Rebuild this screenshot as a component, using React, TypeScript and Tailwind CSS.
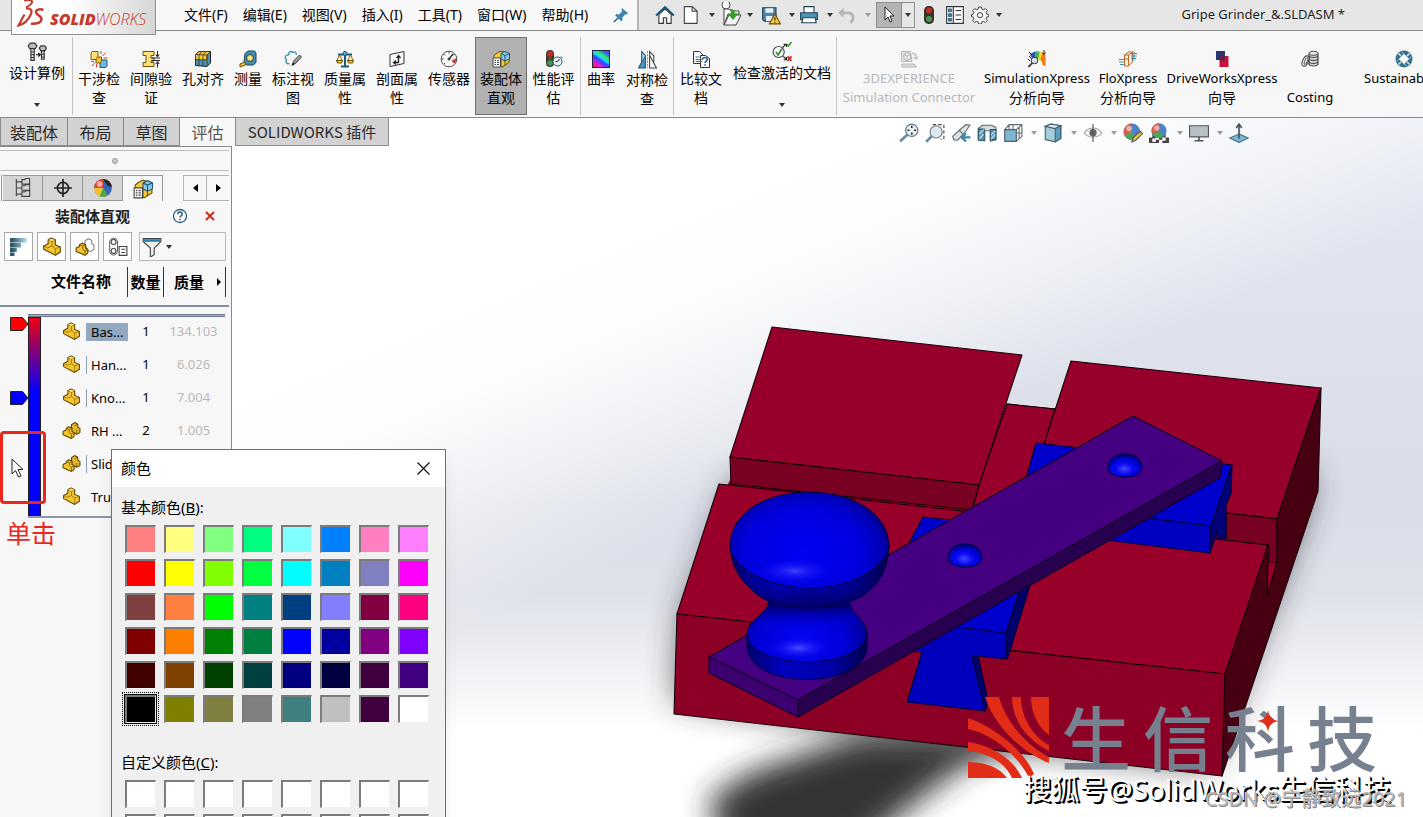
import type { ReactNode } from 'react'

const uiFont = "font-['Noto_Sans','Noto_Sans_CJK_SC',sans-serif]"
const cjkFont = "font-['Noto_Sans_CJK_SC','Noto_Sans',sans-serif]"

function Icon({ children, size = 18 }: { children: ReactNode; size?: number }) {
  return (
    <svg width={size} height={size} viewBox="0 0 18 18" fill="none" strokeWidth="1" className="shrink-0" aria-hidden="true">
      {children}
    </svg>
  )
}

function Caret({ faded = false }: { faded?: boolean }) {
  return (
    <svg width="6" height="4" viewBox="0 0 6 4" className="shrink-0" aria-hidden="true">
      <path d="M0 0h6L3 4z" fill={faded ? '#9a9a9a' : '#333'} />
    </svg>
  )
}

const PartShape = () => (
  <>
    <path d="M1.500 8 5.500 6V2.500L8.500 1l3.500 1.500V7l4.500 2v4.500L12 16.500 1.500 11z" fill="#f4c430" stroke="#5a4300" strokeLinejoin="round" />
    <path d="M5.500 2.500 9 4.200l3-1.700M9 4.200V8l3 2.500 4.500-1.500M12 10.500v5.500M1.500 8 5 9.800 9 8" stroke="#8a6800" strokeWidth=".7" />
    <path d="M6 2.700 8.500 1.500l3 1.200L9 3.900z" fill="#ffe27a" />
  </>
)

const icons = {
  bolts: (
    <>
      <path d="M1 3.500 3 1h4l2 2.500L7.500 6h-5z" fill="#bbb" stroke="#333" />
      <path d="M3.500 6v10.500h3V6z" fill="#ddd" stroke="#333" />
      <path d="M3.500 9h3M3.500 11.500h3M3.500 14h3" stroke="#333" />
      <path d="m11 5.500 1.500-2h3.500l1.500 2L16 8h-3.500z" fill="#bbb" stroke="#333" />
      <path d="M13 8v7.500h2.500V8zM13 11h2.500M13 13.500h2.500" fill="#ddd" stroke="#333" />
      <path d="M8 11.500h3.500M10 9.800l2 1.700-2 1.700" stroke="#111" />
    </>
  ),
  interference: (
    <>
      <path d="M1 3 2.500 1.500H8V8L6.500 9.500H1z" fill="#ffe07a" stroke="#7a5c00" />
      <path d="M10 11.500 11.500 10H17v6l-1.500 1.500H10z" fill="#6db7dd" stroke="#1d5876" />
      <path d="M6 8.500 8 7h3.500v4.500L10 13H6z" fill="#f2c12e" stroke="#7a5c00" />
      <path d="M11 4V1M12.500 6 16 2.500M13.500 8h4M5 12.500 2 16M6.500 14v3.500M4 11.500H1" stroke="#d8392b" />
    </>
  ),
  clearance: (
    <>
      <path d="M1 1.500h11v4H9v2.500h3v3H9v1.500h3v4H1v-4h3v-7H1z" fill="#ffe07a" stroke="#6b5200" />
      <path d="M9.500 8H18M9.500 10.500H18" stroke="#222" />
      <path d="M15.500 1v5M15.500 17.500v-5M13.800 4.500l1.700 2.500 1.700-2.500M13.800 14l1.700-2.500 1.700 2.500" stroke="#222" />
    </>
  ),
  holes: (
    <>
      <path d="M1.500 4.500 5 1.500h11.500V13L13 16.500l-11.500-1z" fill="#4f93b5" stroke="#222" />
      <path d="M1.500 4.500 5 1.500h11.500L13 5v5l-11.500-.500z" fill="#f6c83a" stroke="#5a4300" />
      <path d="M1.500 4.500 13 5M5 5v11M9 5v11M13 5v11.500M5 5l3-3.500M9 5l3-3.500" stroke="#333" strokeWidth=".8" />
    </>
  ),
  measure: (
    <>
      <path d="M6 3.500 9 1h6.500L17 3v9.500L14 15H7.500L5 12z" fill="#3f8fb8" stroke="#1b465c" />
      <circle cx="11" cy="8" r="3.500" fill="#f6d24c" stroke="#1b465c" />
      <circle cx="11" cy="8" r="1.200" fill="#fff" />
      <path d="M7 14.500 1 17v-3l5-2z" fill="#f2c12e" stroke="#6b5200" />
    </>
  ),
  markup: (
    <>
      <path d="M5 5c-1-3 2-4.500 3.500-2.500C10.500 1 13 2.500 12 5M5 5C1.500 4.500 0 7.500 2.500 9.500 1 12 3 14.500 5.500 13.500" stroke="#3a8ba5" strokeWidth="1.300" />
      <path d="m8 15.500 2-5L15.500 5l2 2-5.500 6z" fill="#999" stroke="#444" />
      <path d="m8 15.500 1-3 2 1.500z" fill="#222" />
    </>
  ),
  mass: (
    <>
      <path d="M9 1v15M2 4.500h14" stroke="#1d5876" strokeWidth="2" />
      <path d="M5 16.500h8" stroke="#1d5876" strokeWidth="2" />
      <path d="m3.500 5-3 6h6zM14.500 5l-3 6h6z" stroke="#8a6800" />
      <path d="M.500 10.500h6L5.500 13h-4zM11.500 10.500h6l-1 2.500h-4z" fill="#f6c83a" stroke="#6b5200" />
      <circle cx="9" cy="3.500" r="2" fill="#5fb0d8" stroke="#1d5876" />
    </>
  ),
  section: (
    <>
      <path d="M2 4.500 16 1.500v12L2 16.500z" fill="#fafafa" stroke="#333" />
      <path d="M6 12.500h4.500V6.500M8.500 8l2-2.500 2 2.500M8 10.500l-2.500 2 2.500 2" stroke="#222" strokeWidth="1.300" />
    </>
  ),
  sensor: (
    <>
      <circle cx="9" cy="9" r="7.800" fill="#fafafa" stroke="#555" />
      <path d="M9 1.500v2M3.500 4l1.500 1.500M14.500 4 13 5.500M1.500 9h2M14.500 9h2M4 14l1-1" stroke="#444" />
      <path d="m9 9 4-5" stroke="#222" strokeWidth="1.300" />
      <path d="M12.500 9.500h4l-1.500 4-3-1.500z" fill="#d8392b" />
      <circle cx="9" cy="9" r="1.500" fill="#444" />
    </>
  ),
  visualize: (
    <>
      <path d="M2 8V5.500L5 3l4-2 8 3v8.500L10 17l-6-2z" fill="#f6c83a" stroke="#6b5200" />
      <path d="m9 3.500 4-2 4.500 2V9L13 11 9 9z" fill="#8ccbe8" stroke="#1d5876" />
      <path d="M9 3.500 13 5.500l4.500-2M13 5.500V11" stroke="#1d5876" />
      <path d="M9 9v7.500M13 11v4.500" stroke="#6b5200" />
      <path d="M1 8h7.500v9H1z" fill="#fff" stroke="#444" />
      <path d="M2.500 10.500H4M5 10.500h2M2.500 12.500H4M5 12.500h2M2.500 14.500H4M5 14.500h2" stroke="#444" />
    </>
  ),
  performance: (
    <>
      <rect x="1" y="0" width="8" height="17" rx="4" fill="#3a3a3a" />
      <circle cx="5" cy="4" r="3" fill="#c03028" />
      <circle cx="5" cy="8.500" r="1.500" fill="#6b5428" />
      <circle cx="5" cy="13" r="2.800" fill="#3f9b4b" />
      <circle cx="12.500" cy="11.500" r="4.500" fill="#eaf4f8" stroke="#25566e" />
      <path d="M12.500 11.500 14.500 9M12.500 11.500h-2M9 6.500l-1 1M16 6.500l1.500 1.500" stroke="#222" />
    </>
  ),
  symmetry: (
    <>
      <path d="M7 5v12H.500z" fill="#4f93b5" stroke="#1d5876" />
      <path d="M3.500 11V1.500L7 5" fill="#a5d2e6" stroke="#1d5876" />
      <path d="M11 5v12h6.500z" fill="#fafafa" stroke="#444" />
      <path d="M11 5V1.500l4 4V12" stroke="#444" />
      <path d="M9 1v16" stroke="#888" strokeDasharray="2 1" />
    </>
  ),
  compare: (
    <>
      <path d="M1.500 1.500h6L11 5v8.500H1.500z" fill="#fff" stroke="#333" />
      <path d="M8.500 5.500h5l4 3v9h-9z" fill="#fff" stroke="#333" />
      <path d="M3.500 7h4M3.500 9.500h7M3.500 11.500h7" stroke="#3a7d9c" />
      <path d="M10.700 9.500c0-2.600 4.600-2.600 4.600 0 0 1.800-2.300 1.700-2.300 3.500M13 14.200v1.600" stroke="#1d6d94" strokeWidth="1.600" />
    </>
  ),
  checkDoc: (
    <>
      <circle cx="6" cy="9" r="5" fill="#fff" stroke="#444" />
      <path d="m3.500 9 2 2.500L9 6" stroke="#3c9a3c" strokeWidth="1.800" />
      <path d="m9.500 5 3-3M10.500 2h2.500v2.500M10 13l3 2.500M10.500 16H13v-2.500" stroke="#222" />
      <path d="m13.500 2 1.200 1.500L17.500 0" stroke="#3c9a3c" strokeWidth="1.500" />
      <path d="m14 13 3.500 4M17.500 13 14 17" stroke="#c0302a" strokeWidth="1.600" />
    </>
  ),
  connector: (
    <>
      <path d="M1.500 1.500h9l1.500 10H1.500z" fill="#e0e0e0" stroke="#bbb" />
      <path d="m4 4.500 3-2 3.500 2v4L7 11 4 9z" fill="#f2f2f2" stroke="#b0b0b0" />
      <path d="M4 4.500 7.200 6l3.300-1.500M7 6v5" stroke="#b0b0b0" />
      <path d="M12 3c4 0 5 2 4 6M13.500 7l2.500 2.500L18 7M2 14h12l2.500 3H2z" fill="#ddd" stroke="#b5b5b5" />
    </>
  ),
  simulation: (
    <>
      <path d="M2 5C7 0 13 1 17.500 5v11l-3-1C14 10 11 8.500 6 10z" fill="#f6d21e" />
      <path d="M2 5c2-2.300 4-3.200 6-3.500L6.500 9.500H5z" fill="#2e4fc4" />
      <path d="M8 1.500c1.500-.2 2.500 0 3.500.3L10 9.200l-3.500.3z" fill="#3cb45a" />
      <path d="M14.500 3 17.500 5v11l-3-1c0-3-1-4.500-2-5.500z" fill="#ee7b22" />
      <path d="M16 0v4M14.500 2.500 16 4.500l1.500-2M1 2l3 3M1 6l3 3M0 9l2 2" stroke="#222" />
      <circle cx="6.500" cy="10.500" r="3.300" fill="#cfe3ee" stroke="#333" />
      <path d="m4.300 13-4 4" stroke="#444" strokeWidth="1.800" />
    </>
  ),
  flow: (
    <>
      <path d="m5.500 5 4-3h4v10l-4 4h-4z" fill="#f5e9da" stroke="#b56a2c" />
      <path d="M9.500 5v11M5.500 5h4l4-3M5.500 9h4" stroke="#b56a2c" />
      <path d="M0 9.500h5M0 12h5M1 14.500h4M12 3.500h6M12 6h6M12 8.500h5M15 1.500v9" stroke="#3a95ab" />
    </>
  ),
  driveworks: (
    <>
      <path d="M3 1h9v9H3z" fill="#26386c" />
      <path d="M6.500 6h9v11h-9z" fill="#c8143a" />
      <path d="M6.500 6H12v4.500H6.500z" fill="#6b1c44" />
    </>
  ),
  costing: (
    <>
      <path d="M7.500 3.500v12h9.500v-12z" fill="#d2d2d2" />
      <ellipse cx="12.500" cy="3.300" rx="4.500" ry="2" fill="#eee" stroke="#444" />
      <path d="M8 6c1.500 2 7.500 2 9 0M8 9c1.500 2 7.500 2 9 0M8 12c1.500 2 7.500 2 9 0M8 14.500c1.500 2 7.500 2 9 0M8 3.500v11.500M17 3.500v11.500" stroke="#444" strokeWidth="1.200" />
      <ellipse cx="4.500" cy="11" rx="2.800" ry="5.500" transform="rotate(25 4.500 11)" fill="#f0f0f0" stroke="#444" />
      <ellipse cx="5" cy="11" rx="1.200" ry="3.500" transform="rotate(25 5 11)" stroke="#666" />
    </>
  ),
  sustain: (
    <>
      <circle cx="9" cy="9" r="8.500" fill="#35708c" />
      <path d="m9 3.800 5.200 5.200L9 14.200 3.800 9z" fill="#f7f7f7" />
      <path d="M3.500 3.500 6 6M14.500 3.500 12 6M3.500 14.500 6 12M14.500 14.500 12 12" stroke="#f7f7f7" strokeWidth="1.300" />
      <path d="M6.500 2 9 4M16 6.500 14 9M11.500 16 9 14M2 11.500 4 9" stroke="#8ec1d6" />
    </>
  ),
}

function Curvature() {
  return (
    <span className="block size-[18px] border border-gray-800 bg-[linear-gradient(35deg,#ff2020_0%,#e020e0_22%,#3040ff_42%,#20d8ff_55%,#28f060_68%,#3060ff_84%,#b01ff0_100%)]" />
  )
}

type Tool = {
  lines: string[]
  icon: ReactNode
  width: string
  active?: boolean
  muted?: boolean
  menu?: boolean
  sep?: boolean
}

const tools: Tool[] = [
  { lines: ['设计算例'], icon: <Icon size={20}>{icons.bolts}</Icon>, width: 'w-[71px]', menu: true, sep: true },
  { lines: ['干涉检', '查'], icon: <Icon>{icons.interference}</Icon>, width: 'w-[52px]' },
  { lines: ['间隙验', '证'], icon: <Icon>{icons.clearance}</Icon>, width: 'w-[52px]' },
  { lines: ['孔对齐'], icon: <Icon>{icons.holes}</Icon>, width: 'w-[52px]' },
  { lines: ['测量'], icon: <Icon>{icons.measure}</Icon>, width: 'w-[38px]' },
  { lines: ['标注视', '图'], icon: <Icon>{icons.markup}</Icon>, width: 'w-[52px]' },
  { lines: ['质量属', '性'], icon: <Icon>{icons.mass}</Icon>, width: 'w-[52px]' },
  { lines: ['剖面属', '性'], icon: <Icon>{icons.section}</Icon>, width: 'w-[52px]' },
  { lines: ['传感器'], icon: <Icon>{icons.sensor}</Icon>, width: 'w-[52px]' },
  { lines: ['装配体', '直观'], icon: <Icon>{icons.visualize}</Icon>, width: 'w-[52px]', active: true },
  { lines: ['性能评', '估'], icon: <Icon>{icons.performance}</Icon>, width: 'w-[54px]', sep: true },
  { lines: ['曲率'], icon: <Curvature />, width: 'w-[40px]' },
  { lines: ['对称检', '查'], icon: <Icon size={19}>{icons.symmetry}</Icon>, width: 'w-[53px]', sep: true },
  { lines: ['比较文', '档'], icon: <Icon>{icons.compare}</Icon>, width: 'w-[54px]' },
  { lines: ['检查激活的文档'], icon: <Icon size={20}>{icons.checkDoc}</Icon>, width: 'w-[109px]', menu: true, sep: true },
  { lines: ['3DEXPERIENCE', 'Simulation Connector'], icon: <Icon>{icons.connector}</Icon>, width: 'w-[144px]', muted: true },
  { lines: ['SimulationXpress', '分析向导'], icon: <Icon>{icons.simulation}</Icon>, width: 'w-[112px]' },
  { lines: ['FloXpress', '分析向导'], icon: <Icon>{icons.flow}</Icon>, width: 'w-[70px]' },
  { lines: ['DriveWorksXpress', '向导'], icon: <Icon>{icons.driveworks}</Icon>, width: 'w-[118px]' },
  { lines: ['', 'Costing'], icon: <Icon>{icons.costing}</Icon>, width: 'w-[58px]' },
  { lines: ['Sustainab'], icon: <Icon>{icons.sustain}</Icon>, width: 'w-[130px]' },
]

const isLatin = (text: string) => /^[\x20-\x7e]+$/.test(text)

function RibbonButton({ tool }: { tool: Tool }) {
  const clipped = tool.lines[0] === 'Sustainab'
  return (
    <div className={`flex shrink-0 ${tool.width} ${tool.sep ? 'border-r border-[#c4c4c4]' : ''}`}>
      <button
        className={`flex w-full flex-col items-center border leading-[19px] whitespace-nowrap ${tool.menu ? 'pt-1' : 'pt-[12px]'} ${
          tool.active ? 'border-[#6e6e6e] bg-[#b1b1b1]' : 'border-transparent'
        } ${tool.muted ? 'text-[#b9b9b9]' : 'text-black'}`}
      >
        {tool.icon}
        <span className={`mt-px flex flex-col ${clipped ? 'w-20 items-start' : 'items-center'}`}>
          {tool.lines.map((line, i) => (
            <span key={i} className={`block min-h-[19px] ${isLatin(line) ? 'text-[13px]' : 'text-sm leading-[19px]'}`}>
              {line}
            </span>
          ))}
        </span>
        {tool.menu && <span className="mt-[21px]"><Caret /></span>}
      </button>
    </div>
  )
}

function Logo() {
  return (
    <a href="#" aria-label="SOLIDWORKS" className="relative z-10 ml-[11px] flex h-[35px] w-[145px] shrink-0 items-start self-start border border-t-0 border-[#8f8f8f] bg-linear-to-r from-white from-40% to-[#d6d6d6] pl-1 text-[#c33b2d]">
      <svg width="30" height="28" viewBox="0 0 30 28" fill="none" stroke="#c33b2d" aria-hidden="true">
        <path d="M8 .500c4-1 9-.500 8 2-.800 2-3.500 3.500-6 5" strokeWidth="2" />
        <path d="M10 8.500c5-.300 7 2 4.500 6.500-2 4.500-6.500 9-12 10.500C4 22.500 6.500 18 8.500 14.500" strokeWidth="2.200" />
        <path d="M27.500 9.800c-4-1.300-8-.300-7.500 2.700.500 2.500 6 3.500 5.500 7-.500 3.500-4.500 4.500-10.500 4.300" strokeWidth="2.400" />
      </svg>
      <span className="mt-[9px] ml-1 font-['Open_Sans','Noto_Sans',sans-serif] text-[16px] leading-5 font-extrabold italic">
        SOLID<span className="font-light">WORKS</span>
      </span>
    </a>
  )
}

const menus = ['文件(F)', '编辑(E)', '视图(V)', '插入(I)', '工具(T)', '窗口(W)', '帮助(H)']

function TitleBar() {
  return (
    <header className="flex h-[31px] shrink-0 items-stretch border-b border-[#8a8a8a] bg-[#e6e6e6]">
      <Logo />
      <nav className="flex shrink-0 items-center gap-[15px] border-r-2 border-[#b5b5b5] bg-[#f8f8f8] pr-2 pl-[28px]">
        {menus.map((menu) => (
          <button key={menu} className="text-sm whitespace-nowrap text-black">{menu}</button>
        ))}
        <button aria-label="固定" className="ml-[10px]">
          <Icon size={16}>
            <path d="m10 1 7 6-2 1.500-1-.300-3.500 3.500.300 3.300-1.500 1L2.500 9.500l1-1.500 3.500.300L10.300 4.500 9.500 3z" fill="#3f86ad" />
            <path d="m6 12-5 5" stroke="#2a5f80" strokeWidth="1.600" />
          </Icon>
        </button>
      </nav>
      <div className="flex shrink-0 items-center pl-[16px]">
        <button aria-label="主页">
          <Icon size={20}>
            <path d="M3.500 8.500V16.500h4v-5h3v5h4V8.500L9 3.500z" fill="#fff" stroke="#333" />
            <path d="M1 9.500 9 2l8 7.500" stroke="#1d5876" strokeWidth="2" />
          </Icon>
        </button>
        <button aria-label="新建" className="ml-[6px] flex items-center gap-2">
          <Icon size={20}>
            <path d="M3 1.500h7l4.500 4v11H3z" fill="#fff" stroke="#444" />
            <path d="M10 1.500v4h4.500" stroke="#444" />
          </Icon>
          <Caret />
        </button>
        <button aria-label="打开" className="ml-1 flex items-center gap-1">
          <svg width="24" height="26" viewBox="0 0 24 26" fill="none" aria-hidden="true">
            <path d="M5 7h5l2 2h8v3H9l-4 11z" fill="#fff" stroke="#444" />
            <path d="M10 13h12l-5 10H5z" fill="#f4f4f4" stroke="#444" />
            <path d="M10 7c5 0 6 2 6 5h3l-5 6-5-6h3c0-2 0-3-2-5z" fill="#3c9a2c" />
            <circle cx="7" cy="3" r="4" fill="#fff" stroke="#444" />
          </svg>
          <Caret />
        </button>
        <button aria-label="保存" className="ml-2 flex items-center gap-2">
          <Icon size={20}>
            <path d="M1.500 2.500h12v12H3l-1.500-1.500z" fill="#4b86a8" stroke="#1f4254" />
            <path d="M4 3h7v4H4zM4.500 10h6v4.500h-6z" fill="#e8eef2" />
            <path d="m12.500 8 5 9h-10z" fill="#f6c83a" stroke="#6b5200" />
            <path d="M12.500 11v3M12.500 15v1" stroke="#222" />
          </Icon>
          <Caret />
        </button>
        <button aria-label="打印" className="ml-1 flex items-center gap-2">
          <Icon size={20}>
            <path d="M4.500 7V1.500h9V7" fill="#fff" stroke="#1f4254" />
            <path d="M1.500 7h15v6h-15z" fill="#4f93b5" stroke="#1f4254" />
            <path d="M3.500 11.500h11l1 4.500h-13z" fill="#fff" stroke="#1f4254" />
          </Icon>
          <Caret />
        </button>
        <button aria-label="撤消" className="ml-1 flex items-center gap-2" disabled>
          <Icon size={20}>
            <path d="M3 7h7c5 0 6 6 2 9" stroke="#b5b5b5" strokeWidth="2.500" />
            <path d="M1 7 6 2.500v9z" fill="#b5b5b5" />
          </Icon>
          <Caret faded />
        </button>
        <button aria-label="选择" className="ml-[5px] flex h-[26px] w-[39px] items-center border border-[#8f8f8f]">
          <span className="flex h-full w-[25px] items-center justify-center border-r border-[#8f8f8f] bg-[#b4b4b4]">
            <Icon>
              <path d="M5 1v13l3-3 2 5 2-1-2-5h4z" fill="#fff" stroke="#222" />
            </Icon>
          </span>
          <span className="ml-[3px]"><Caret /></span>
        </button>
        <button aria-label="重建模型" className="ml-1">
          <Icon size={20}>
            <rect x="4.500" y="1" width="9" height="16" rx="4" fill="#3a3028" />
            <circle cx="9" cy="5" r="2.700" fill="#c03028" />
            <circle cx="9" cy="12.500" r="2.700" fill="#3f9b4b" />
          </Icon>
        </button>
        <button aria-label="文件属性" className="ml-[6px]">
          <Icon size={20}>
            <path d="M1.500 1.500h15v15h-15z" fill="#fff" stroke="#333" />
            <path d="M7.500 2v14" stroke="#333" />
            <path d="M3 3.500h3v2.500H3zM3 7.800h3v2.500H3zM3 12h3v2.500H3z" fill="#3f86ad" stroke="#1f4254" strokeWidth=".6" />
            <path d="M9.500 5h5M9.500 9h5M9.500 13h5" stroke="#333" />
          </Icon>
        </button>
        <button aria-label="选项" className="ml-[6px] flex items-center gap-[7px]">
          <Icon size={18}>
            <path d="M7.600 1h2.800l.5 2.200 1.500.6 1.900-1.200 2 2-1.200 1.900.6 1.500 2.200.5v2l-2.200.6-.6 1.500 1.200 1.900-2 2-1.900-1.200-1.500.6-.5 2.100H7.600l-.5-2.100-1.500-.6-1.900 1.200-2-2 1.200-1.900-.6-1.500L.500 10.500v-2l1.800-.5.6-1.500-1.200-1.900 2-2 1.900 1.200 1.500-.6z" fill="#f4f4f4" stroke="#444" />
            <circle cx="9" cy="9.200" r="2.600" stroke="#444" />
          </Icon>
          <Caret />
        </button>
      </div>
      <h1 className="ml-auto self-center pr-[78px] text-[13px] font-normal whitespace-nowrap text-[#1f1f1f]">Gripe Grinder_&amp;.SLDASM *</h1>
    </header>
  )
}

const tabs = [
  { label: '装配体', width: 'w-[67px]' },
  { label: '布局', width: 'w-[56px]' },
  { label: '草图', width: 'w-[56px]' },
  { label: '评估', width: 'w-[56px]', active: true },
  { label: 'SOLIDWORKS 插件', width: 'w-[153px]' },
]

const viewTools: { name: string; icon: ReactNode; menu?: boolean }[] = [
  {
    name: '整屏显示全图',
    icon: (
      <>
        <circle cx="11.500" cy="6.500" r="5.500" fill="#e8f0f4" stroke="#5f7886" />
        <path d="m7.500 10.500-6.500 6" stroke="#6a8ca0" strokeWidth="2.500" />
        <path d="M11.500 2.500v2M11.500 8.500v2M7.500 6.500h2M13.500 6.500h2" stroke="#333" strokeWidth="1.500" />
      </>
    ),
  },
  {
    name: '局部放大',
    icon: (
      <>
        <path d="M7 1.500h10v13h-3" stroke="#444" strokeDasharray="3 2" />
        <circle cx="10" cy="8" r="5.500" fill="#dfe8ec" stroke="#6d7c84" />
        <path d="m6 12-5 5" stroke="#6a8ca0" strokeWidth="2.500" />
      </>
    ),
  },
  {
    name: '上一视图',
    icon: (
      <>
        <path d="m1.500 12 6-5.500 6-5 3.500.500-4.500 6.500L6 15.500l-3.500-.5z" fill="#dfe3e6" stroke="#5f6b73" />
        <path d="m7.500 6.500 3 3.500" stroke="#5f6b73" />
        <path d="M17.500 13H11M13.500 9.500 9.500 13l4 3.500" stroke="#3f86ad" strokeWidth="2" />
      </>
    ),
  },
  {
    name: '剖面视图',
    icon: (
      <>
        <path d="M1 5 5 2h8l4 2v11l-5 1.500V7L7 7v9l-6-1z" fill="#d5dde2" stroke="#5f6b73" />
        <path d="M1.500 5.500h5v10h-5zM12 6h5v9h-5z" fill="#5b9cbf" stroke="#33566a" />
        <path d="m2 10 4-4M2 14l4-4M12.500 11 16.500 7M12.500 14.500l4-4" stroke="#cfe3ee" />
      </>
    ),
  },
  {
    name: '视图定向',
    menu: true,
    icon: (
      <>
        <path d="M1.500 6h10.500v10.500H1.500z" fill="#7fb5d0" stroke="#44606e" />
        <path d="m1.500 6 4-4.500H17V12l-5 4.500M12 6l5-4.500M5.500 1.500V6M12 9h5M14.500 3.500V14M9 1.500V6" stroke="#5f6b73" />
      </>
    ),
  },
  {
    name: '显示样式',
    menu: true,
    icon: (
      <>
        <path d="m2 3 5-2 9 1.500V14l-5 3-9-2z" fill="#a5cbdc" stroke="#44606e" />
        <path d="m2 3 9 2 5-2.500-9-1.500z" fill="#e3eff4" stroke="#44606e" />
        <path d="M11 5v12l5-3V2.500z" fill="#5b9cbf" stroke="#44606e" />
      </>
    ),
  },
  {
    name: '隐藏/显示项目',
    menu: true,
    icon: (
      <>
        <path d="M1 9c4-6 12-6 16 0-4 5-12 5-16 0z" fill="#f1f1f1" stroke="#a5a5a5" />
        <circle cx="9" cy="8.800" r="3.300" fill="#666" />
        <path d="M9 1v16" stroke="#555" />
      </>
    ),
  },
  {
    name: '编辑外观',
    icon: (
      <>
        <circle cx="8" cy="8" r="7.500" fill="#4b82cc" />
        <path d="M8 8V.500A7.500 7.500 0 0 0 1.500 11.500z" fill="#d9604c" />
        <path d="M8 8 1.500 11.500A7.500 7.500 0 0 0 12 14.200z" fill="#4da853" />
        <circle cx="5.500" cy="5" r="2.500" fill="#fff" opacity=".5" />
        <path d="m8 17 1.500-4 6-5.500 2 2-6 6z" fill="#f2c648" stroke="#555" />
      </>
    ),
  },
  {
    name: '应用布景',
    menu: true,
    icon: (
      <>
        <path d="M0 10h18v8H0z" fill="#444" />
        <path d="M0 10h3v3H0zM6 13h3v2H6zM12 13h3v3h-3zM3 14h3v3H3zM15 10h3v3h-3zM9 15h3v3H9z" fill="#fff" />
        <circle cx="9" cy="7" r="6.800" fill="#4b82cc" />
        <path d="M9 7V.200A6.800 6.800 0 0 0 3 10z" fill="#d9604c" />
        <path d="M9 7 3 10a6.800 6.800 0 0 0 10 2.300z" fill="#4da853" />
        <circle cx="7" cy="4.500" r="2.500" fill="#fff" opacity=".5" />
      </>
    ),
  },
  {
    name: '视图设定',
    menu: true,
    icon: (
      <>
        <path d="M.500 2.500h17v10H.500z" fill="#b9c0c5" stroke="#555" />
        <path d="M9 12.500v3M5 16h8" stroke="#555" strokeWidth="1.500" />
      </>
    ),
  },
  {
    name: '参考基准',
    icon: (
      <>
        <path d="m9 10 8.500 3.500L9 17.500.500 13.500z" fill="#7fb5d0" stroke="#3a6e88" />
        <path d="M9 14V2M6.500 4.500 9 1l2.500 3.500" stroke="#44555e" strokeWidth="1.500" />
      </>
    ),
  },
]

function TabStrip() {
  return (
    <div className="relative flex shrink-0 items-start">
      <div role="tablist" className={`flex h-7 border-l border-[#8f8f8f] ${cjkFont}`}>
        {tabs.map((tab) => (
          <button
            key={tab.label}
            role="tab"
            aria-selected={!!tab.active}
            className={`border-r border-[#8a8a8a] leading-6 whitespace-nowrap ${tab.width} ${isLatin(tab.label[0]) ? 'text-[15px]' : 'text-base leading-6'} ${
              tab.active ? 'bg-[#f7f7f7] text-[#555]' : 'border-b bg-[#d2d2d2] text-[#2b2b2b]'
            }`}
          >
            {tab.label}
          </button>
        ))}
      </div>
      <div className="mr-[174px] ml-auto flex h-7 items-center gap-[6px] pt-[2px]">
        {viewTools.map((tool) => (
          <button key={tool.name} aria-label={tool.name} className="flex items-center gap-2">
            <Icon size={20}>{tool.icon}</Icon>
            {tool.menu && <Caret faded />}
          </button>
        ))}
      </div>
    </div>
  )
}

const panelTabs = [
  <path key="t" d="M3 1v15.500M3 3.500h5M3 9h5M3 14.500h5M8 1.500h2.500l1-1H15v5H8zM8 7h2.500l1-1H15v5H8zM8 12.500h2.500l1-1H15v5H8z" stroke="#444" />,
  <g key="c" stroke="#222" strokeWidth="1.500">
    <circle cx="9" cy="9" r="5" />
    <path d="M9 1v16M1 9h16" />
  </g>,
  <g key="a">
    <circle cx="9" cy="9" r="8" fill="#3566b8" />
    <path d="M9 9V1a8 8 0 0 0-8 8z" fill="#e0442e" />
    <path d="M9 9H1a8 8 0 0 0 12 7z" fill="#f3c330" />
    <path d="M9 9l4 7a8 8 0 0 1-7 .500z" fill="#4da853" />
    <path d="M9 1a8 8 0 0 1 8 7l-4-1z" fill="#222" />
    <circle cx="6" cy="5.500" r="2.500" fill="#fff" opacity=".6" />
  </g>,
  <g key="v">{icons.visualize}</g>,
]

const AssemblyShape = () => (
  <>
    <path d="M9 5.500V3.500l3-2L15 3v3l2 1v4l-3 1.500L9 10z" fill="#e5b52c" stroke="#5a4300" strokeLinejoin="round" />
    <path d="m1 10 3-1.500V7l2.500-1.500L9.500 7v3l2 1v3.500L9 16.500 1 13z" fill="#f4c430" stroke="#5a4300" strokeLinejoin="round" />
    <path d="m4 7 3 1.300L9.500 7M7 8.300V11l2 1.500 2.500-1.500M9 12.500v4M12 4.500l3-1.500M14 8.500V12" stroke="#7a5c00" strokeWidth=".8" />
  </>
)

const parts = [
  { name: 'Bas...', count: '1', mass: '134.103', kind: 'part', selected: true },
  { name: 'Han...', count: '1', mass: '6.026', kind: 'part', bar: true },
  { name: 'Kno...', count: '1', mass: '7.004', kind: 'part', bar: true },
  { name: 'RH ...', count: '2', mass: '1.005', kind: 'assembly' },
  { name: 'Slid', count: '', mass: '', kind: 'assembly', bar: true },
  { name: 'Tru.', count: '', mass: '', kind: 'part' },
]

function GradientRail() {
  return (
    <svg width="45" height="199" viewBox="0 0 45 199" className="shrink-0" aria-hidden="true">
      <defs>
        <linearGradient id="rail" x1="0" y1="0" x2="0" y2="1">
          <stop offset="0" stopColor="#f00010" />
          <stop offset=".38" stopColor="#0000ff" />
          <stop offset="1" stopColor="#0000ff" />
        </linearGradient>
      </defs>
      <rect x="28.500" y=".5" width="12" height="198" fill="url(#rail)" stroke="#222" />
      <path d="M10.500.500h12l5.500 6.500-5.500 6.500h-12z" fill="#ff0000" stroke="#222" />
      <path d="M10.500 74.500h12l5.500 6.500-5.500 6.500h-12z" fill="#0000ff" stroke="#222" />
    </svg>
  )
}

function SidePanel() {
  return (
    <aside className="relative flex w-[232px] flex-1 flex-col border-t border-r border-[#8a8a8a] bg-[#f7f7f7]">
      <div className="mt-[3px] mr-[2px] flex h-[21px] items-center justify-center border-y border-[#bdbdbd]">
        <span className="size-[6px] rounded-full border border-[#999] bg-[#ccc]" />
      </div>
      <div className="mt-1 mr-[2px] ml-px flex h-[26px] items-stretch border-l border-[#999] pl-px">
        {panelTabs.map((glyph, i) => (
          <button
            key={i}
            aria-label={['特征树', '配置', '外观', '装配体直观'][i]}
            className={`flex w-10 items-center justify-center border-t border-r border-[#999] ${i === 3 ? '' : 'border-b bg-[#d5d5d5]'}`}
          >
            <Icon size={20}>{glyph}</Icon>
          </button>
        ))}
        <div className="ml-5 flex flex-1 border border-r-0 border-[#b5b5b5]">
          <button aria-label="上一页" className="flex flex-1 items-center justify-center border-r border-[#b5b5b5]">
            <svg width="5" height="8" viewBox="0 0 5 8"><path d="M5 0v8L0 4z" /></svg>
          </button>
          <button aria-label="下一页" className="flex flex-1 items-center justify-center">
            <svg width="5" height="8" viewBox="0 0 5 8"><path d="M0 0v8l5-4z" /></svg>
          </button>
        </div>
      </div>
      <div className="flex h-[30px] items-center pl-[55px]">
        <h2 className="text-[15px] font-bold text-[#222]">装配体直观</h2>
        <button aria-label="帮助" className="ml-[42px]">
          <svg width="16" height="16" viewBox="0 0 16 16" fill="none">
            <circle cx="8" cy="8" r="6.500" fill="#fff" stroke="#2d5d80" strokeWidth="1.300" />
            <path d="M5.800 6.300c0-3 4.400-3 4.400 0 0 1.600-2.200 1.600-2.200 3.200M8 10.700v1.500" stroke="#2d5d80" strokeWidth="1.500" />
          </svg>
        </button>
        <button aria-label="关闭" className="ml-[17px]">
          <svg width="10" height="10" viewBox="0 0 10 10"><path d="m1 1 8 8M9 1 1 9" stroke="#c8321e" strokeWidth="2.200" /></svg>
        </button>
      </div>
      <div className="mt-px flex gap-1 pr-[5px] pl-1">
        <button aria-label="数值条" className="flex size-[29px] items-center justify-center border border-[#a8a8a8] bg-white">
          <Icon size={20}>
            <defs>
              <linearGradient id="bars" gradientUnits="userSpaceOnUse" x1="1" y1="0" x2="16" y2="0">
                <stop offset="0" stopColor="#1d4658" />
                <stop offset="1" stopColor="#b5dcec" />
              </linearGradient>
            </defs>
            <path d="M1 1h15v4H1zM1 5.500h10v4H1zM1 10h6v3.500H1zM1 14h4v3H1z" fill="url(#bars)" />
          </Icon>
        </button>
        <button aria-label="零件视图" className="flex size-[29px] items-center justify-center border border-[#a8a8a8] bg-white">
          <Icon size={20}><PartShape /></Icon>
        </button>
        <button aria-label="装配体视图" className="flex size-[29px] items-center justify-center border border-[#a8a8a8] bg-white">
          <Icon size={20}>
            <path d="M9 6V3.500l3-2 3 1.500v3l2 1v4L14 13l-3-1z" fill="#fff" stroke="#888" strokeLinejoin="round" />
            <path d="m1 10 3-1.500V7l2.500-1.500L9.500 7v3l2 1v3.500L9 16.500 1 13z" fill="#f4c430" stroke="#5a4300" strokeLinejoin="round" />
            <path d="m4 7 3 1.300L9.500 7M7 8.300V11l2 1.500 2.500-1.500M9 12.500v4" stroke="#7a5c00" strokeWidth=".8" />
          </Icon>
        </button>
        <button aria-label="分组" className="flex size-[29px] items-center justify-center border border-[#a8a8a8] bg-white">
          <Icon size={20}>
            <circle cx="5" cy="4.500" r="2.200" stroke="#444" />
            <circle cx="5" cy="12.500" r="2.200" stroke="#444" />
            <path d="M1.500 4.500C1.500 0 8.500 0 8.500 4.500v8c0 5-7 5-7 0z" stroke="#444" strokeWidth=".8" />
            <path d="M10 8.500h7v8h-7z" fill="#fff" stroke="#444" />
            <path d="M12 11h3.500M12 14h3.500" stroke="#444" />
          </Icon>
        </button>
        <button aria-label="过滤器" className="ml-[3px] flex h-[29px] flex-1 items-center gap-1 border border-[#b9b9b9] px-[2px]">
          <Icon size={20}>
            <path d="M1 1.500h16V4l-6 6v6l-3.500 2v-8L1 4z" fill="#eee" stroke="#444" />
            <path d="M1.500 2h15v2.300h-15z" fill="#2d7da5" />
          </Icon>
          <Caret />
        </button>
      </div>
      <div className="mt-[6px] flex h-[30px] items-stretch pr-[5px] pl-[35px] text-[15px] font-bold text-black">
        <button className="flex flex-1 flex-col items-center border-r border-[#333] pt-1 leading-5">
          文件名称
          <svg width="6" height="3" viewBox="0 0 6 3"><path d="M3 0 0 3h6z" /></svg>
        </button>
        <button className="w-9 border-r border-[#333] leading-5">数量</button>
        <button className="flex w-[62px] items-center justify-between border-r border-[#333] pr-1 pl-[10px] leading-5">
          质量
          <svg width="4" height="8" viewBox="0 0 4 8"><path d="M0 0v8l4-4z" /></svg>
        </button>
      </div>
      <div className="mt-2 mr-[2px] h-[2px] bg-[#868da0]" />
      <div className="mt-[7px] mr-[6px] ml-7 h-[3px] border-y border-[#70788c] bg-[#a6acc0]" />
      <div className="flex items-start">
        <GradientRail />
        <table className="-mt-[2px] h-[198px] flex-1 table-fixed border-collapse text-[13px] text-black">
          <tbody>
            {parts.map((part) => (
              <tr key={part.name} className="h-[33px]">
                <td className="w-[41px] p-0 pl-[17px]">
                  <Icon size={19}>{part.kind === 'part' ? <PartShape /> : <AssemblyShape />}</Icon>
                </td>
                <td className="w-[42px] p-0">
                  <span className={`block h-[18px] border-l pl-1 leading-[18px] whitespace-nowrap ${part.selected ? 'border-[#92a8c0] bg-[#92a8c0]' : part.bar ? 'border-[#8ba0b8]' : 'border-transparent'}`}>
                    {part.name}
                  </span>
                </td>
                <td className="w-9 p-0 text-center">{part.count}</td>
                <td className="p-0 pr-2 text-center text-[#b9b9b9]">{part.mass}</td>
              </tr>
            ))}
          </tbody>
        </table>
      </div>
      <div className="mr-[6px] ml-7 h-[2px] bg-[#8f97ac]" />
      {/* click marker over the colour rail */}
      <div className="absolute top-[284px] left-0 h-[73px] w-[46px] rounded-sm border-[3px] border-[#e8281e]">
        <svg width="14" height="20" viewBox="0 0 14 20" className="mt-6 ml-2" aria-hidden="true">
          <path d="M1 1v15l3.500-3.500L7.500 19l2.500-1-3-6.500H12z" fill="#fff" stroke="#222" />
        </svg>
      </div>
      <strong className={`ml-[6px] text-[25px] leading-7 font-normal text-[#e8281e] ${cjkFont}`}>单击</strong>
    </aside>
  )
}

const basicColors = [
  ['#ff8080', '#ffff80', '#80ff80', '#00ff80', '#80ffff', '#0080ff', '#ff80c0', '#ff80ff'],
  ['#ff0000', '#ffff00', '#80ff00', '#00ff40', '#00ffff', '#0080c0', '#8080c0', '#ff00ff'],
  ['#804040', '#ff8040', '#00ff00', '#008080', '#004080', '#8080ff', '#800040', '#ff0080'],
  ['#800000', '#ff8000', '#008000', '#008040', '#0000ff', '#0000a0', '#800080', '#8000ff'],
  ['#400000', '#804000', '#004000', '#004040', '#000080', '#000040', '#400040', '#400080'],
  ['#000000', '#808000', '#808040', '#808080', '#408080', '#c0c0c0', '#400040', '#ffffff'],
].flat()

const SELECTED_COLOR = 40

function Swatch({ color, selected = false }: { color: string; selected?: boolean }) {
  return (
    <button
      aria-label={color}
      aria-pressed={selected}
      style={{ backgroundColor: color }}
      className={`h-7 w-[31px] border-t-2 border-r border-b border-l-2 border-t-[#7c7c7c] border-r-[#f0f0f0] border-b-[#f0f0f0] border-l-[#7c7c7c] ${
        selected ? 'ring-1 ring-black outline-1 outline-offset-2 outline-black outline-dotted' : ''
      }`}
    />
  )
}

function ColorDialog() {
  return (
    <div role="dialog" aria-label="颜色" className="absolute top-[331px] left-[111px] w-[335px] border border-[#6f6f6f] bg-[#f0f0f0] pb-8 text-[15px] text-black shadow-lg">
      <div className="flex h-[37px] items-center justify-between bg-white pr-[15px] pl-[9px]">
        <h2>颜色</h2>
        <button aria-label="关闭">
          <svg width="13" height="13" viewBox="0 0 13 13"><path d="m.5.5 12 12M12.500.500l-12 12" stroke="#111" strokeWidth="1.200" /></svg>
        </button>
      </div>
      <p className="mt-2 pl-[9px] leading-6">基本颜色(<u>B</u>):</p>
      <div className="mt-[6px] grid grid-cols-[repeat(8,31px)] gap-x-2 gap-y-[6px] pl-[13px]">
        {basicColors.map((color, i) => (
          <Swatch key={i} color={color} selected={i === SELECTED_COLOR} />
        ))}
      </div>
      <p className="mt-[27px] pl-[9px] leading-6">自定义颜色(<u>C</u>):</p>
      <div className="mt-[6px] grid grid-cols-[repeat(8,31px)] gap-x-2 gap-y-[6px] pl-[13px]">
        {Array.from({ length: 16 }, (_, i) => (
          <Swatch key={i} color="#ffffff" />
        ))}
      </div>
    </div>
  )
}

function Model() {
  return (
    <svg viewBox="0 118 1423 699" preserveAspectRatio="xMidYMid slice" className="absolute inset-0 size-full" aria-label="Gripe Grinder" role="img">
      <defs>
        <linearGradient id="sky" x1="0" y1="0" x2="0" y2="1">
          <stop offset="0" stopColor="#e4e8f2" />
          <stop offset=".55" stopColor="#dadde8" />
          <stop offset=".68" stopColor="#dfe1ea" />
          <stop offset=".88" stopColor="#ffffff" />
        </linearGradient>
        <linearGradient id="glow" gradientUnits="userSpaceOnUse" x1="450" y1="299" x2="571" y2="584">
          <stop offset="0" stopColor="#fff" />
          <stop offset=".3" stopColor="#fff" stopOpacity=".93" />
          <stop offset=".65" stopColor="#fff" stopOpacity=".5" />
          <stop offset="1" stopColor="#fff" stopOpacity="0" />
        </linearGradient>
        <filter id="soft" x="-30%" y="-30%" width="160%" height="160%"><feGaussianBlur stdDeviation="15" /></filter>
        <filter id="halo" x="-20%" y="-20%" width="140%" height="140%"><feGaussianBlur stdDeviation="16" /></filter>
        <radialGradient id="shine">
          <stop offset="0" stopColor="#5050ff" />
          <stop offset=".3" stopColor="#3030ff" stopOpacity=".7" />
          <stop offset="1" stopColor="#0000f0" stopOpacity="0" />
        </radialGradient>
        <radialGradient id="knobTop" gradientUnits="userSpaceOnUse" cx="803" cy="552" r="90" gradientTransform="matrix(1 0 0 .75 0 138)">
          <stop offset="0" stopColor="#0000f4" />
          <stop offset=".65" stopColor="#0000de" />
          <stop offset=".88" stopColor="#0000b4" />
          <stop offset="1" stopColor="#00007c" />
        </radialGradient>
        <radialGradient id="knobBase" gradientUnits="userSpaceOnUse" cx="802" cy="642" r="72" gradientTransform="matrix(1 0 0 .8 0 128)">
          <stop offset="0" stopColor="#0404f4" />
          <stop offset=".6" stopColor="#0000d8" />
          <stop offset="1" stopColor="#000084" />
        </radialGradient>
        <linearGradient id="rim">
          <stop offset="0" stopColor="#00006c" />
          <stop offset=".3" stopColor="#0000c0" />
          <stop offset=".7" stopColor="#0000a8" />
          <stop offset="1" stopColor="#00004c" />
        </linearGradient>
        <linearGradient id="underside" x1="0" y1="0" x2="0" y2="1">
          <stop offset=".6" stopColor="#000050" stopOpacity="0" />
          <stop offset="1" stopColor="#000050" stopOpacity=".8" />
        </linearGradient>
        <linearGradient id="neck" x1="0" y1="0" x2="0" y2="1">
          <stop offset="0" stopColor="#000048" />
          <stop offset=".5" stopColor="#0000b0" />
          <stop offset="1" stopColor="#0000dc" stopOpacity="0" />
        </linearGradient>
        <radialGradient id="rivet" cx=".48" cy=".65" r=".6">
          <stop offset="0" stopColor="#4646ff" />
          <stop offset=".4" stopColor="#0a0af4" />
          <stop offset=".8" stopColor="#0000c0" />
          <stop offset="1" stopColor="#000070" />
        </radialGradient>
      </defs>
      <rect y="118" width="1423" height="699" fill="url(#sky)" />
      <rect y="118" width="1423" height="699" fill="url(#glow)" />
      <path d="M735 480 682 620 676 700 900 738 1210 768 1308 505 1312 470z" fill="#333" opacity=".8" filter="url(#halo)" />
      <path d="M750 772 860 735H1030L960 768 900 815 860 850H725L708 800z" fill="#2c2c2c" opacity=".95" filter="url(#soft)" />

      <path d="M735 470 985 480 1007 404 1055 409 1225 500 1268 545 972 530 725 490z" fill="#96002a" />
      <g stroke="#180008" strokeWidth="1.100" strokeLinejoin="round">
        <path d="m1007 404 48 5" />
        <path d="m719 484 549 61-43 129-548-60z" fill="#98002a" />
        <path d="m677 614 548 60-3 102-548-62z" fill="#8c0026" />
        <path d="M979 485 1007 404 1055 409 1044 444 1030 520 972 512z" fill="#96002a" />
        <path d="m772 327 250 28-43 130-249-28z" fill="#96002a" />
        <path d="m730 457 249 28-7 25-241-26z" fill="#780020" />
        <path d="m1071 361 250 27-44 131-58-7-175-68z" fill="#96002a" />
        <path d="m1226 513 51 6v43l-9 34 1-51-43-5z" fill="#780020" />
        <path d="m1268 562 9 0-10 34z" fill="#96002a" />
        <path d="m1321 388-3 103-96 285 3-102 43-129-1 52 10-35v-43z" fill="#470012" />
      </g>

      <g stroke="#000038" strokeWidth="1.200" strokeLinejoin="round">
        <path d="m1036 443 196 22-21 61-151-19-33-32z" fill="#0000cc" />
        <path d="m1095 512 116 14-1 27-112-14z" fill="#0000c0" />
        <path d="m1232 465-1 28-5 12v33l-9 1 1-10-8 24 1-27z" fill="#000078" />
        <path d="m923 517 117 13-20 60-14 43-91-11-15-62z" fill="#0000cc" />
        <path d="m915 622 91 11v26l-30-3 9 55-78-9 15-50-20-2z" fill="#0000bc" />
        <path d="m1034 572-26 85-2 2v-26l15-45zM972 656h6l10 45-3 10z" fill="#00006c" />
      </g>

      <g stroke="#14002c" strokeWidth="1.200" strokeLinejoin="round">
        <path d="m1133 416 89 45-424 239-89-43z" fill="#440080" />
        <path d="m1222 461-1 16-423 240v-17z" fill="#280050" />
        <path d="m709 657 89 43v17l-89-44z" fill="#3c0070" />
      </g>

      <g stroke="#000038">
        <path d="M948 558c0-19 34-19 34 0 0 12-34 12-34 0z" fill="url(#rivet)" />
        <path d="M1108 468c0-19 34-19 34 0 0 12-34 12-34 0z" fill="url(#rivet)" />
        <path d="M747 634v14c4 42 116 42 120 0v-14z" fill="url(#rim)" />
        <path d="M747 634c0-14 20-20 21-30h82c1 10 17 16 17 30-2 37-118 37-120 0z" fill="url(#knobBase)" />
        <path d="M768 600c0 12-8 14-12 20 14 12 92 12 104 0-4-6-10-8-10-20z" fill="url(#neck)" stroke="none" />
        <ellipse cx="799" cy="648" rx="32" ry="12" fill="url(#shine)" stroke="none" />
        <path d="M730 545c1 22 10 34 22 45 10 11 30 18 58 18s50-8 60-18c11-10 18-22 19-45z" fill="url(#rim)" />
        <path d="M730 545c1 22 10 34 22 45 10 11 30 18 58 18s50-8 60-18c11-10 18-22 19-45z" fill="url(#underside)" stroke="none" />
        <path d="M730 546c0-33 36-54 79-54s80 21 80 55c-2 18-34 41-79 41s-79-22-80-42z" fill="url(#knobTop)" />
        <ellipse cx="795" cy="571" rx="42" ry="14" fill="url(#shine)" stroke="none" opacity=".8" />
      </g>
    </svg>
  )
}

function Watermarks() {
  return (
    <div className="pointer-events-none absolute right-4 bottom-[6px] flex flex-col items-end">
      <div className="flex items-start pr-[30px]">
        <svg width="82" height="82" viewBox="0 0 82 82" fill="none" className="mt-[3px]" aria-hidden="true">
          <path d="M0 65c18 0 32 6 39 16H0z" fill="#e12d17" />
          <path d="M63 0h18v38C70 30 63 16 63 0z" fill="#e12d17" />
          <path d="M0 45c26 4 46 18 54 36H44C38 67 22 56 0 54zM0 21c26 9 56 32 66 56l-5 4C52 62 28 38 0 32zM17 0h14c6 22 24 46 50 60v6C52 54 26 28 17 0zM44 0h9c0 20 12 40 28 48v6C60 44 44 24 44 0z" fill="#e12d17" />
        </svg>
        <div className={`relative ml-[11px] flex gap-3 text-[70px] leading-[84px] font-medium text-[#76808f] ${cjkFont}`}>
          <span>生</span>
          <span>信</span>
          <span>科</span>
          <span>技</span>
          <svg width="22" height="22" viewBox="0 0 22 22" className="absolute top-4 left-[196px]" aria-hidden="true">
            <path d="M11 0c1 7 4 10 11 11-7 1-10 4-11 11-1-7-4-10-11-11C7 10 10 7 11 0z" fill="#e12d17" />
          </svg>
        </div>
      </div>
      <p className="-mt-2 pr-4 text-[28px] leading-9 text-white [text-shadow:1px_1px_0_#000,2px_2px_0_#000]">搜狐号@SolidWorks生信科技</p>
      <p className="-mt-5 text-[20px] leading-6 text-[#b9b9b9] [text-shadow:1px_1px_0_#888]">CSDN @宁静致远2021</p>
    </div>
  )
}

export default function App() {
  return (
    <div className={`flex h-screen flex-col overflow-hidden bg-[#f7f7f7] ${uiFont}`}>
      <TitleBar />
      <div className="flex h-[87px] shrink-0 overflow-hidden border-b border-[#8a8a8a] bg-[#f7f7f7] pt-[6px] pb-[2px] pl-[2px]">
        {tools.map((tool) => (
          <RibbonButton key={tool.lines.join('')} tool={tool} />
        ))}
      </div>
      <main className="relative flex min-h-0 flex-1 flex-col overflow-hidden">
        <Model />
        <TabStrip />
        <SidePanel />
        <Watermarks />
        <ColorDialog />
      </main>
    </div>
  )
}
